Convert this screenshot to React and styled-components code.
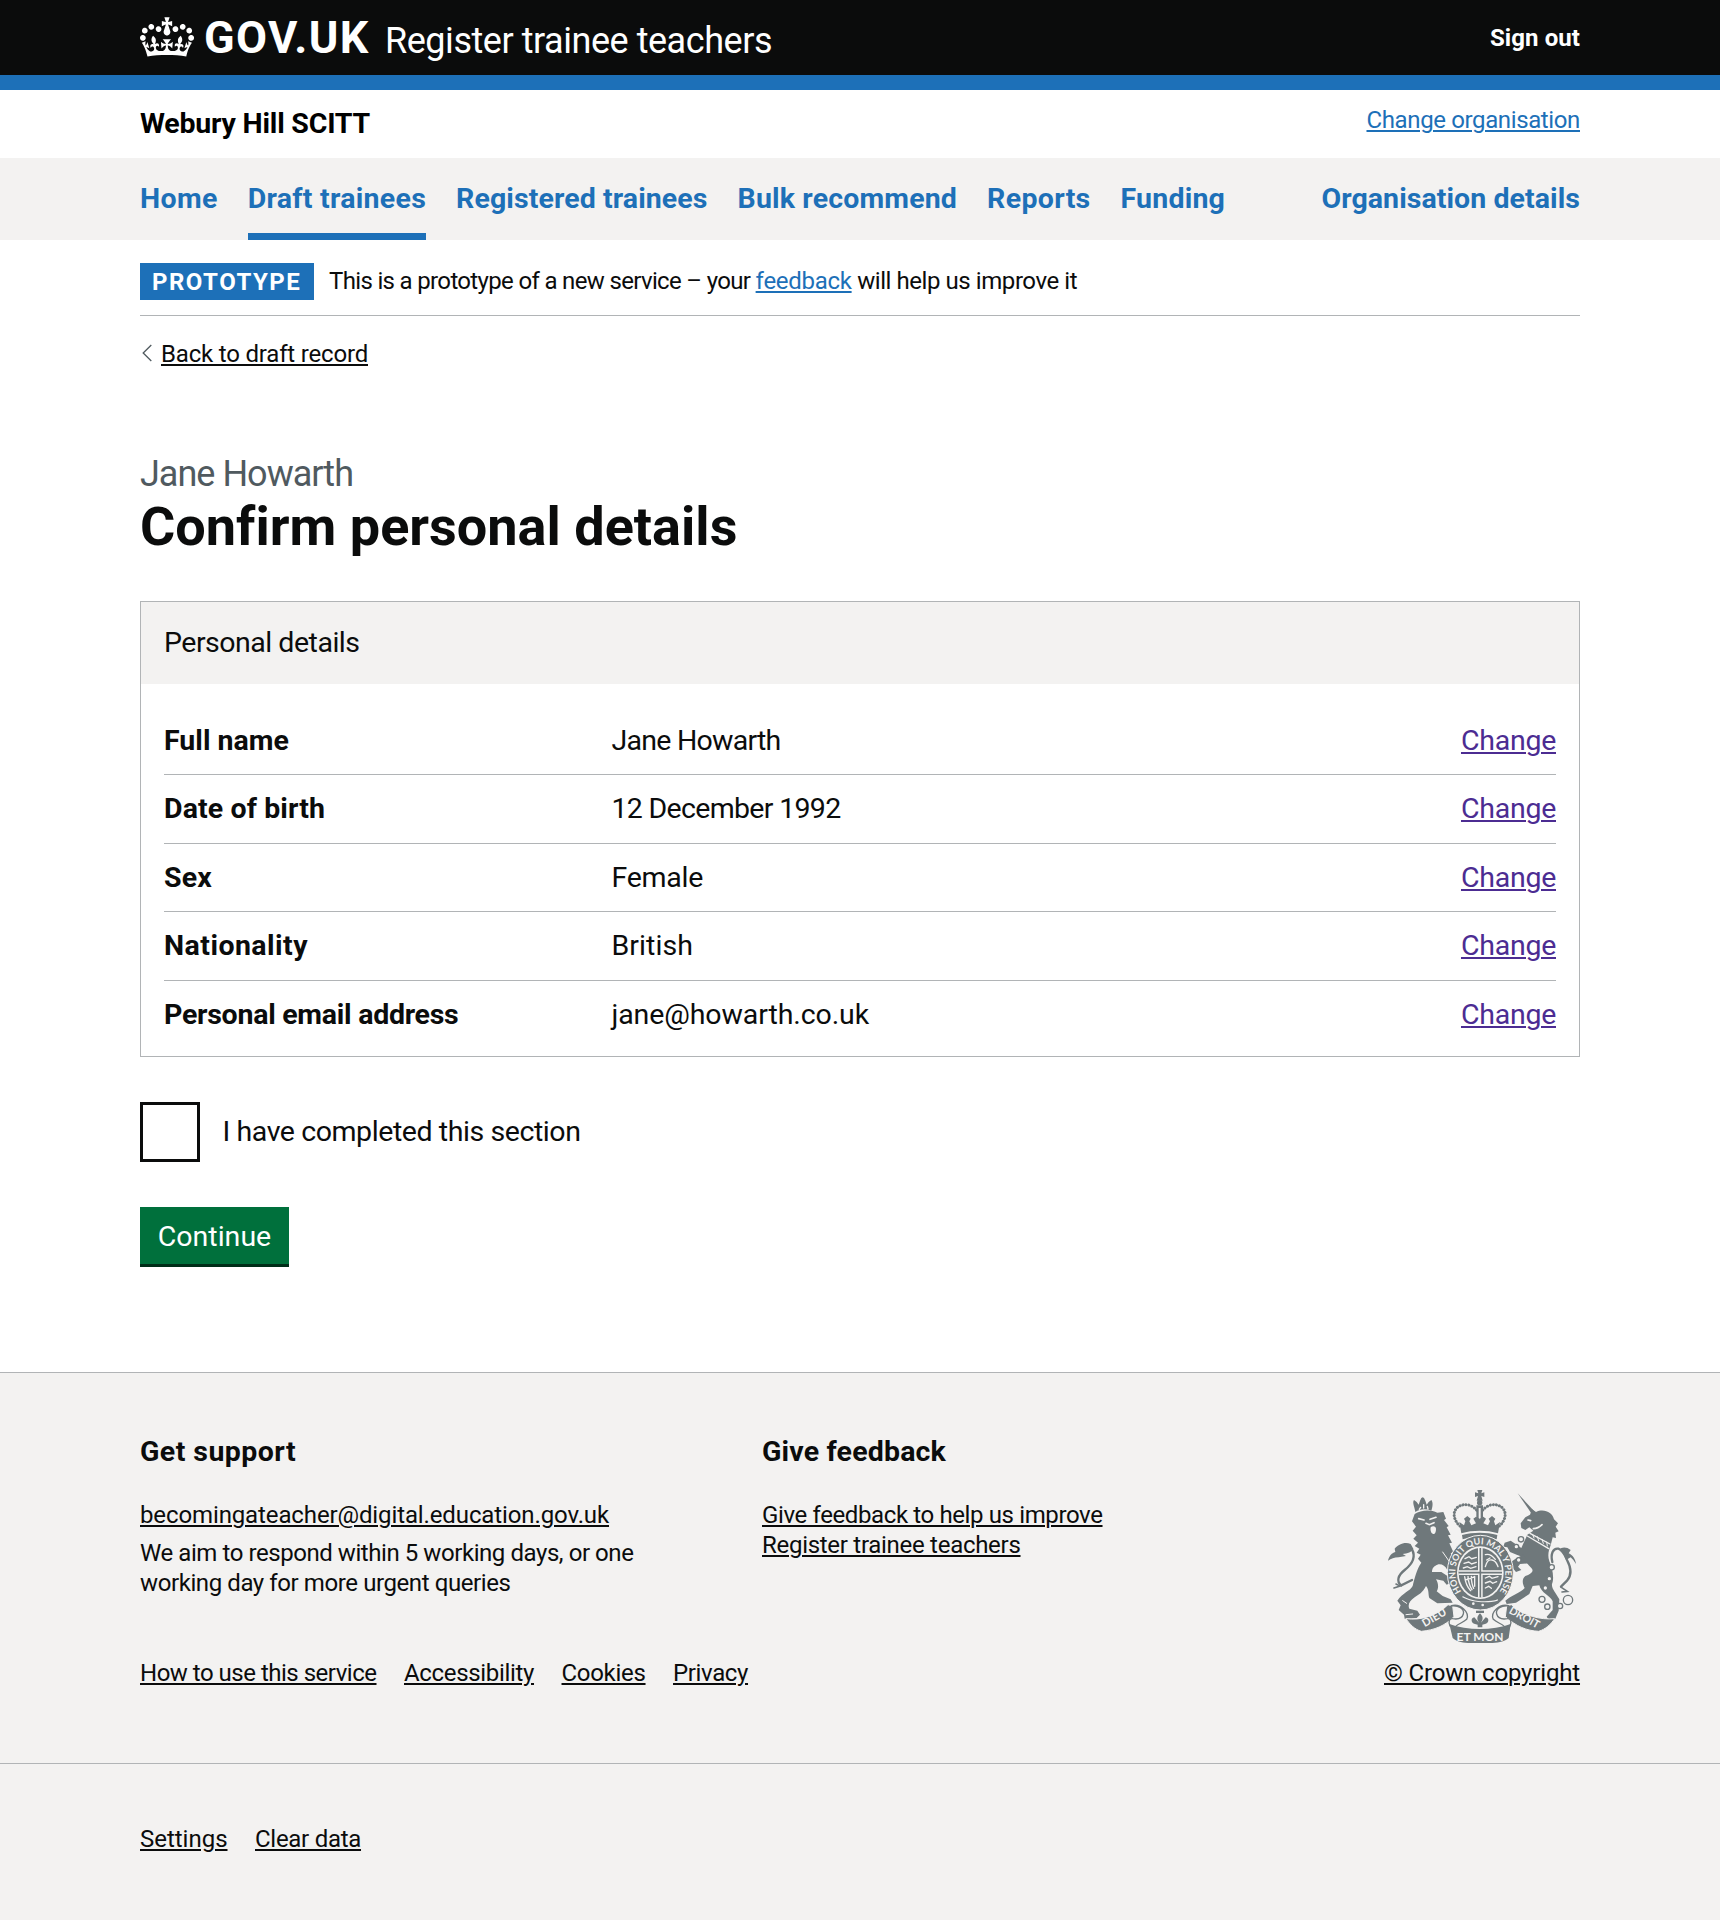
import React from "react";
import styled, { createGlobalStyle, css } from "styled-components";

const c = {
  ink: "#0b0c0c",
  blue: "#1d70b8",
  visited: "#4c2c92",
  grey: "#f3f2f1",
  line: "#b1b4b6",
  secondary: "#505a5f",
  green: "#00703c",
  crest: "#6f787b",
};

const GlobalStyle = createGlobalStyle`
  *, *::before, *::after { box-sizing: border-box; }
  body {
    margin: 0;
    background: #fff;
    color: ${c.ink};
    font-family: Roboto, "Liberation Sans", sans-serif;
    font-size: 28.5px;
    line-height: 37.5px;
  }
  h1, h2, p, ul, dl, dd, dt { margin: 0; padding: 0; font: inherit; }
  ul { list-style: none; }
`;

const tracking = css`
  letter-spacing: ${(p) => p.$ls || 0}px;
`;

const Page = styled.div`
  display: flex;
  flex-direction: column;
  min-height: 1920px;
`;

const Container = styled.div`
  width: 1440px;
  margin: 0 auto;
`;

const T = styled.span`
  ${tracking}
`;

const Link = styled.a`
  ${tracking}
  color: ${(p) => p.$color || c.ink};
  text-decoration: underline;
  text-decoration-thickness: 2px;
  text-underline-offset: 2px;
  white-space: nowrap;
`;

/* Header */
const Header = styled.header`
  height: 90px;
  background: ${c.ink};
  border-bottom: 15px solid ${c.blue};
  color: #fff;
`;
const HeaderRow = styled(Container)`
  display: flex;
  align-items: flex-start;
  height: 75px;
`;
const Crown = styled.svg`
  display: block;
  width: 54px;
  height: 40px;
  margin: 16.5px 10px 0 0;
  fill: #fff;
`;
const Logotype = styled.span`
  ${tracking}
  width: 181px;
  padding-top: 15px;
  font-size: 45px;
  font-weight: 700;
  line-height: 45px;
  white-space: nowrap;
`;
const ServiceName = styled.span`
  ${tracking}
  flex: 1;
  padding-top: 23px;
  font-size: 36px;
  line-height: 37.5px;
`;
const SignOut = styled.span`
  ${tracking}
  padding-top: 23px;
  font-size: 24px;
  font-weight: 700;
  line-height: 30px;
`;

/* Organisation bar */
const OrgBar = styled(Container)`
  display: flex;
  justify-content: space-between;
  align-items: flex-start;
  height: 68px;
  padding-top: 15px;
  color: #000;
`;
const OrgName = styled.span`
  ${tracking}
  font-weight: 700;
`;
const OrgChange = styled.span`
  font-size: 24px;
  line-height: 30px;
`;

/* Primary navigation */
const Nav = styled.nav`
  height: 82px;
  background: ${c.grey};
`;
const NavList = styled.ul`
  display: flex;
  gap: 30px;
  width: 1440px;
  height: 82px;
  margin: 0 auto;
`;
const NavItem = styled.li`
  ${tracking}
  width: ${(p) => p.$w}px;
  margin-left: ${(p) => (p.$last ? "auto" : 0)};
  padding-top: 22px;
  border-bottom: ${(p) => (p.$current ? `7px solid ${c.blue}` : "0")};
  color: ${c.blue};
  font-weight: 700;
  white-space: nowrap;
`;

/* Phase banner */
const Phase = styled(Container)`
  display: flex;
  height: 76px;
  padding-top: 23px;
  border-bottom: 1px solid ${c.line};
  font-size: 24px;
  line-height: 30px;
`;
const Tag = styled.strong`
  ${tracking}
  width: 174px;
  height: 37px;
  margin-right: 15px;
  padding: 4px 0 0 12px;
  background: ${c.blue};
  color: #fff;
  font-weight: 700;
`;
const PhaseText = styled.span`
  padding-top: 3px;
  white-space: pre;
`;

const BackLink = styled(Container)`
  display: flex;
  align-items: flex-start;
  gap: 9.5px;
  padding-top: 23px;
  font-size: 24px;
  line-height: 30px;
`;
const Chevron = styled.svg`
  display: block;
  width: 10px;
  height: 18px;
  margin: 5px 0 0 1.5px;
  fill: none;
  stroke: ${c.secondary};
  stroke-width: 1.3;
`;

/* Main */
const Main = styled(Container)`
  padding-top: 87px;
`;
const Caption = styled.span`
  ${tracking}
  display: block;
  color: ${c.secondary};
  font-size: 36px;
  line-height: 37.5px;
`;
const Title = styled.h1`
  ${tracking}
  padding-top: 4.5px;
  margin-bottom: 46px;
  font-size: 54px;
  font-weight: 700;
  line-height: 57px;
`;
const Card = styled.section`
  border: 1px solid ${c.line};
  height: 456px;
`;
const CardHeader = styled.div`
  ${tracking}
  height: 82px;
  padding: 22px 23px 0;
  background: ${c.grey};
`;
const Rows = styled.dl`
  padding: 22.5px 23px 0;
`;
const Row = styled.div`
  display: flex;
  padding: 15px 0;
  height: ${(p) => (p.$last ? 67.5 : 68.5)}px;
  border-bottom: ${(p) => (p.$last ? "0" : `1px solid ${c.line}`)};
`;
const Key = styled.dt`
  ${tracking}
  width: 447.5px;
  font-weight: 700;
`;
const Value = styled.dd`
  ${tracking}
  flex: 1;
`;

const Check = styled.label`
  display: flex;
  align-items: center;
  gap: 22.5px;
  height: 60px;
  margin: 45px 0;
`;
const Box = styled.span`
  width: 60px;
  height: 60px;
  border: 3px solid ${c.ink};
`;
const Button = styled.button`
  ${tracking}
  display: block;
  width: 149px;
  height: 57px;
  padding: 2px 0 0;
  border: 0;
  background: ${c.green};
  box-shadow: 0 3px 0 #002d18;
  color: #fff;
  font: inherit;
`;

/* Footer */
const Footer = styled.footer`
  flex: 1;
  margin-top: 108px;
  border-top: 1px solid ${c.line};
  background: ${c.grey};
  font-size: 24px;
  line-height: 30px;
`;
const Columns = styled(Container)`
  display: grid;
  grid-template-columns: 622px 500px 1fr;
  height: 390px;
  padding-top: 60px;
`;
const FooterHeading = styled.h2`
  ${tracking}
  margin-bottom: 29.5px;
  font-size: 28.5px;
  font-weight: 700;
  line-height: 37.5px;
`;
const FooterLine = styled.p`
  margin-top: ${(p) => p.$gap || 0}px;
  white-space: nowrap;
`;
const LinkRow = styled.ul`
  display: flex;
  gap: 27.5px;
  margin-top: ${(p) => p.$top || 0}px;
`;
const CrestColumn = styled.div`
  display: flex;
  flex-direction: column;
  align-items: center;
  justify-self: end;
  width: 196px;
  padding-top: 57px;
`;
const Crest = styled.svg`
  display: block;
  width: 188px;
  height: 153px;
  margin-bottom: 15px;
`;
const CrestText = styled.text`
  font-family: Lato, sans-serif;
  font-weight: 700;
  font-size: ${(p) => p.$size}px;
  fill: ${c.grey};
  text-anchor: middle;
`;
const PrototypeLinks = styled.div`
  border-top: 1px solid ${c.line};
  padding-top: 59.5px;
`;

const nav = [
  ["Home", 77.7, 0.353],
  ["Draft trainees", 178.4, 0.28],
  ["Registered trainees", 251.5, 0.097],
  ["Bulk recommend", 219.5, 0.158],
  ["Reports", 103.5, 0.331],
  ["Funding", 104.5, 0.197],
  ["Organisation details", 258.5, 0.067],
];

const details = [
  ["Full name", 0.025, "Jane Howarth", -0.752],
  ["Date of birth", 0.11, "12 December 1992", -0.679],
  ["Sex", 0.187, "Female", -0.269],
  ["Nationality", 0.46, "British", 0.071],
  ["Personal email address", -0.263, "jane@howarth.co.uk", -0.104],
];

const CrownLogo = () => (
  <Crown viewBox="0 0 132 97" aria-hidden="true">
    <path d="M25 30.2c3.5 1.5 7.7-.2 9.1-3.7 1.5-3.6-.2-7.8-3.9-9.2-3.6-1.4-7.6.3-9.1 3.9-1.4 3.5.3 7.5 3.9 9zM9 39.5c3.6 1.5 7.8-.2 9.2-3.7 1.5-3.6-.2-7.8-3.9-9.1-3.6-1.5-7.6.2-9.1 3.8-1.4 3.5.3 7.5 3.8 9zM4.4 57.2c3.5 1.5 7.7-.2 9.1-3.8 1.5-3.6-.2-7.7-3.9-9.1-3.5-1.5-7.6.3-9.1 3.8-1.4 3.5.3 7.6 3.9 9.1zm38.3-21.4c3.5 1.5 7.7-.2 9.1-3.8 1.5-3.6-.2-7.7-3.9-9.1-3.6-1.5-7.6.3-9.1 3.8-1.3 3.6.4 7.7 3.9 9.1zm64.4-5.6c-3.6 1.5-7.8-.2-9.1-3.7-1.5-3.6.2-7.8 3.8-9.2 3.6-1.4 7.7.3 9.2 3.9 1.3 3.5-.4 7.5-3.9 9zm15.9 9.3c-3.6 1.5-7.7-.2-9.1-3.7-1.5-3.6.2-7.8 3.7-9.1 3.6-1.5 7.7.2 9.2 3.8 1.5 3.5-.3 7.5-3.8 9zm4.7 17.7c-3.6 1.5-7.8-.2-9.2-3.8-1.5-3.6.2-7.7 3.9-9.1 3.6-1.5 7.7.3 9.2 3.8 1.3 3.5-.4 7.6-3.9 9.1zM89.3 35.8c-3.6 1.5-7.8-.2-9.2-3.8-1.4-3.6.2-7.7 3.9-9.1 3.6-1.5 7.7.3 9.2 3.8 1.4 3.6-.3 7.7-3.9 9.1zM69.7 17.7l8.9 4.7V9.3l-8.9 2.8c-.2-.3-.5-.6-.9-.9L72.4 0H59.6l3.5 11.2c-.3.3-.6.5-.9.9l-8.8-2.8v13.1l8.8-4.7c.3.3.6.7.9.9l-5 15.4v.1c-.2.8-.4 1.6-.4 2.4 0 4.1 3.1 7.5 7 8.1h.2c.3 0 .7.1 1 .1.4 0 .7 0 1-.1h.2c4-.6 7.1-4.1 7.1-8.1 0-.8-.1-1.7-.4-2.4V34l-5.1-15.4c.4-.2.7-.6 1-.9zM66 92.8c16.9 0 32.8 1.1 47.1 3.2 4-16.9 8.9-26.7 14-33.5l-9.6-3.4c1 4.9 1.1 7.2 0 10.2-1.5-1.4-3-4.3-4.2-8.7L108.6 76c2.8-2 5-3.2 7.5-3.3-4.4 9.4-10 11.9-13.6 11.2-4.3-.8-6.3-4.6-5.6-7.9 1-4.7 5.7-5.9 8-.5 4.3-8.7-3-11.4-7.6-8.8 7.1-7.2 7.9-13.5 2.1-21.1-8 6.1-8.1 12.3-4.5 20.8-4.7-5.4-12.1-2.5-9.5 6.2 3.4-5.2 7.9-2 7.2 3.1-.6 4.3-6.4 7.8-13.5 7.2-10.3-.9-10.9-8-11.2-13.8 2.5-.5 7.1 1.8 11 7.3L80.2 60c-4.1 4.4-8 5.3-12.3 5.4 1.4-4.4 8-11.6 8-11.6H55.5s6.4 7.2 7.9 11.6c-4.2-.1-8-1-12.3-5.4l1.4 16.4c3.9-5.5 8.5-7.7 10.9-7.3-.3 5.8-.9 12.8-11.1 13.8-7.2.6-12.9-2.9-13.5-7.2-.7-5 3.8-8.3 7.1-3.1 2.7-8.7-4.6-11.6-9.4-6.2 3.7-8.5 3.6-14.7-4.6-20.8-5.8 7.6-5 13.9 2.2 21.1-4.7-2.6-11.9.1-7.7 8.8 2.3-5.5 7.1-4.2 8.1.5.7 3.3-1.3 7.1-5.7 7.9-3.5.7-9-1.8-13.5-11.2 2.5.1 4.7 1.3 7.5 3.3l-4.7-15.4c-1.2 4.4-2.7 7.2-4.3 8.7-1.1-3-.9-5.3 0-10.2l-9.5 3.4c5 6.9 9.9 16.7 14 33.5 14.8-2.1 30.8-3.2 47.7-3.2z" />
  </Crown>
);

const RoyalArms = () => (
  <Crest viewBox="12 18 564 459" role="img" aria-label="Royal coat of arms">
    <g fill={c.crest}>
      {/* crown */}
      <path d="M280 18h15l-3 10 9-3v14l-9-3 4 14h-18l4-14-9 3V25l10 3z" />
      <circle cx="287" cy="56" r="8" />
      <path fillRule="evenodd" d="M277 64h20v50h-20zM284 72v34h6V72z" />
      <g fill="none" stroke={c.crest} strokeWidth="9" strokeLinecap="round" strokeDasharray="0.1 9">
        <path d="M228 126c-16-14-22-34-14-48 8-16 32-20 48-12 10 5 16 12 20 18" />
        <path d="M346 126c16-14 22-34 14-48-8-16-32-20-48-12-10 5-16 12-20 18" />
      </g>
      <path d="M232 148l-6-34 14 10 4-12-4-8 10-8 10 8-4 8 6 12 14-6-8-14 8-6 11 6 11-6 8 6-8 14 14 6 6-12-4-8 10-8 10 8-4 8 4 12 14-10-6 34c-34-10-76-10-110 0z" />
      <path d="M234 153c34-9 72-9 106 0l-2 13c-32-9-70-9-102 0z" />

      {/* lion */}
      <path d="M94 84c-2-14-10-28-4-36l8 6 6 8 4-12 4-8 4-2 4 2 4 8 4 12 6-8 8-6c6 8 4 20 0 32-16-6-34-6-48 4z" />
      <path d="M92 90C110 78 140 76 160 86L178 84 186 104 180 108 194 126 188 130 200 152 192 154 204 176 196 178 208 204 200 208 212 226 204 236 214 250 204 262 190 258C184 244 170 238 160 242C150 246 144 252 144 264L172 264 196 280 200 296 188 302 178 290 156 286C164 300 164 312 158 322L176 336 200 346 206 356 160 358 136 342C132 330 136 318 126 306C116 326 104 332 92 340C78 350 70 362 76 374L100 380 108 392 98 402 62 404 60 392 44 378 50 364 40 350C56 326 78 322 86 306C92 282 98 256 112 236L102 224 110 212 98 206 106 194 92 186 102 176 88 164 98 154 86 140 96 128 84 112Z" />
      <path d="M12 230c4-14 10-22 22-26l-2-10c10-12 30-22 48-14l8 14c-4 10-18 14-32 16l10 6-22 4c-14 0-22 4-32 10z" />

      {/* unicorn */}
      <path d="M401 28l54 58-9 8z" />
      <path d="M410 118L424 100 438 92 444 76 456 84C480 72 506 86 510 106L522 118 515 128 524 142 514 146 516 162 506 160 500 184C494 200 490 214 496 232C504 250 512 280 504 300C502 314 516 326 526 346L524 380 514 404 494 408 488 398 506 378 506 352C500 336 470 326 466 304L446 306 436 330 396 356 368 360 364 350C380 336 410 326 422 312C416 300 412 286 424 276C440 270 452 262 442 252C432 242 424 232 418 220L398 212 378 204 370 190 358 188 362 176 380 170 398 182 412 192C418 178 424 166 430 152L448 140 436 130 424 138 412 132Z" />
      <path d="M418 212L398 222 384 232 384 250 396 264 412 258 402 248 408 240 436 238z" />
      <path d="M576 240c-2-16-10-26-22-32l6-10c-12-10-28-10-34 0l12 12 8 18 14-8 8 8z" />
    </g>
    <g fill="none" stroke={c.crest} strokeLinecap="round" strokeWidth="7">
      <path d="M84 196c14 26-2 46-22 62-20 16-26 34-10 46l32-16" />
      <path d="M505 234c-6-24 2-42 18-40 14 4 20 20 26 34 12 22 14 46 0 62l-18 18" />
      <path d="M532 310l18 12-16 2M36 300l12 6-18 6" strokeWidth="5" />
    </g>

    {/* faces, coronet collar and musculature */}
    <g fill="none" stroke={c.grey} strokeWidth="5" strokeLinecap="round">
      <path d="M104 104l16 4M138 106l18-6M126 118l10 4 14-6" />
      <path d="M448 134c10 0 18-4 26-12M432 108l8 2" />
      <path d="M106 76l4-6M119 72v-10M132 75l-2-8" strokeWidth="4" />
      <path d="M430 156l64 38M438 148l60 32" strokeWidth="4" />
      <path d="M446 152l4 10M460 158l4 12M474 166l4 12M488 174l2 12" strokeWidth="3" />
      <path d="M176 204l28 40M56 350l12 8M66 392l20-2" strokeWidth="3" />
    </g>
    <path d="M140 130c6-6 16-4 16 4s-2 16-8 16-10-10-8-20z" fill={c.grey} />
    <g fill={c.grey} stroke={c.crest} strokeWidth="4">
      <circle cx="411" cy="166" r="8" />
      <circle cx="397" cy="188" r="7" />
      <circle cx="404" cy="228" r="7" />
      <circle cx="503" cy="250" r="8" />
      <circle cx="496" cy="284" r="7" />
      <circle cx="484" cy="312" r="7" />
      <circle cx="474" cy="346" r="9" />
      <circle cx="490" cy="368" r="8" />
      <circle cx="528" cy="366" r="8" />
      <circle cx="552" cy="348" r="14" />
    </g>

    {/* garter */}
    <ellipse cx="289" cy="266" rx="99" ry="112" fill={c.crest} stroke={c.grey} strokeWidth="3" />
    <ellipse cx="289" cy="266" rx="70" ry="79" fill={c.grey} />
    <ellipse cx="289" cy="266" rx="65" ry="74" fill={c.crest} />
    {/* quartered shield */}
    <g stroke={c.grey} fill="none">
      <path d="M289 192v148M224 266h130" strokeWidth="14" />
      <g strokeWidth="4" strokeLinecap="round">
        <path d="M243 224l12-6 8 6 14-4M240 238l14-4 9 6 14-5M238 252l12-4 10 5 16-5" />
        <path d="M304 212c14-4 22 4 30 14M304 248c4-14 8-22 20-20s14 10 18 20M308 228l10-6" />
        <path d="M304 282l12-5 8 6 18-5M304 297l14-5 8 6 12-5M304 312l10-5 8 6" />
        <path d="M242 278c2 16 6 30 18 42M252 277c1 14 4 28 12 40M262 277c0 14 2 26 7 36M272 277v30M244 288c10-2 20-6 28-10" />
      </g>
    </g>
    <path d="M289 192v148M224 266h130" stroke={c.crest} strokeWidth="5" fill="none" />

    <path id="garter" d="M236 328A75 86 0 1 1 342 328" fill="none" />
    <CrestText $size="27">
      <textPath href="#garter" startOffset="50%" textLength="372">HONI SOIT QUI MAL Y PENSE</textPath>
    </CrestText>
    <g fill={c.grey}>
      <circle cx="268" cy="359" r="4" />
      <circle cx="296" cy="363" r="4" />
      <path d="M236 336c20 14 70 22 106 10l-1 4c-34 10-82 4-106-10z" />
    </g>

    {/* motto ribbon */}
    <g fill={c.crest} stroke={c.grey} strokeWidth="3">
      <path d="M66 404c44 6 92-8 126-42l14 4 4 32c-28 28-58 40-98 44-20-6-34-20-46-38z" />
      <path d="M512 404c-42 4-94-8-130-42l-14 4-4 32c34 30 64 42 100 44 20-6 36-20 48-38z" />
    </g>
    <g fill={c.grey} stroke={c.crest} strokeWidth="4">
      <path d="M200 366c24-4 42 10 38 24s-20 16-32 14c-10-2-14 10-8 22l14 8c0-12 24-16 36-28 10-20-18-50-48-40z" />
      <path d="M376 366c-24-4-42 10-38 24s20 16 32 14c10-2 14 10 8 22l-14 8c0-12-24-16-36-28-10-20 18-50 48-40z" />
    </g>
    <path d="M196 420c54 20 130 20 184 0l-6 42c-14 14-44 16-86 16s-68-2-82-16z" fill={c.crest} />
    <g fill={c.crest}>
      <path d="M276 380h24v7h-24z" />
      <path d="M288 388c10 10 10 18 3 28l14-16c12 2 10 18-2 20l-8 2v8h-14v-8l-8-2c-12-2-14-18-2-20l14 16c-7-10-7-18 3-28z" />
    </g>
    <CrestText $size="33" transform="translate(156 410) rotate(-30)">DIEU</CrestText>
    <CrestText $size="32" transform="translate(416 410) rotate(29)">DROIT</CrestText>
    <CrestText $size="36" x="288" y="470">ET MON</CrestText>
  </Crest>
);

export default function App() {
  return (
    <Page>
      <GlobalStyle />
      <Header>
        <HeaderRow>
          <CrownLogo />
          <Logotype $ls={1.45}>GOV.UK</Logotype>
          <ServiceName $ls={-0.456}>Register trainee teachers</ServiceName>
          <SignOut $ls={0.079}>Sign out</SignOut>
        </HeaderRow>
      </Header>
      <OrgBar>
        <OrgName $ls={-0.207}>Webury Hill SCITT</OrgName>
        <OrgChange>
          <Link $color={c.blue} $ls={-0.373}>Change organisation</Link>
        </OrgChange>
      </OrgBar>
      <Nav>
        <NavList>
          {nav.map(([label, w, ls], i) => (
            <NavItem key={label} $w={w} $ls={ls} $current={i === 1} $last={i === nav.length - 1}>
              {label}
            </NavItem>
          ))}
        </NavList>
      </Nav>
      <Phase>
        <Tag $ls={1.5}>PROTOTYPE</Tag>
        <PhaseText>
          <T $ls={-0.66}>This is a prototype of a new service – your </T>
          <Link $color={c.blue} $ls={-0.289}>feedback</Link>
          <T $ls={-0.43}> will help us improve it</T>
        </PhaseText>
      </Phase>
      <BackLink>
        <Chevron viewBox="0 0 10 18" aria-hidden="true">
          <path d="M9.3 1 1.2 9l8.1 8" />
        </Chevron>
        <Link $ls={-0.184}>Back to draft record</Link>
      </BackLink>
      <Main as="main">
        <Caption $ls={-0.99}>Jane Howarth</Caption>
        <Title $ls={0.01}>Confirm personal details</Title>
        <Card>
          <CardHeader $ls={-0.491}>Personal details</CardHeader>
          <Rows>
            {details.map(([key, kls, value, vls], i) => (
              <Row key={key} $last={i === details.length - 1}>
                <Key $ls={kls}>{key}</Key>
                <Value $ls={vls}>{value}</Value>
                <Link $color={c.visited} $ls={-0.267}>Change</Link>
              </Row>
            ))}
          </Rows>
        </Card>
        <Check>
          <Box />
          <T $ls={-0.418}>I have completed this section</T>
        </Check>
        <Button $ls={0.018}>Continue</Button>
      </Main>
      <Footer>
        <Columns>
          <div>
            <FooterHeading $ls={0.448}>Get support</FooterHeading>
            <FooterLine>
              <Link $ls={-0.118}>becomingateacher@digital.education.gov.uk</Link>
            </FooterLine>
            <FooterLine $gap={8}>
              <T $ls={-0.435}>We aim to respond within 5 working days, or one</T>
              <br />
              <T $ls={-0.408}>working day for more urgent queries</T>
            </FooterLine>
            <LinkRow $top={60}>
              <li><Link $ls={-0.492}>How to use this service</Link></li>
              <li><Link $ls={-0.331}>Accessibility</Link></li>
              <li><Link $ls={-0.301}>Cookies</Link></li>
              <li><Link $ls={-0.362}>Privacy</Link></li>
            </LinkRow>
          </div>
          <div>
            <FooterHeading $ls={0.174}>Give feedback</FooterHeading>
            <FooterLine>
              <Link $ls={-0.378}>Give feedback to help us improve</Link>
              <br />
              <Link $ls={-0.284}>Register trainee teachers</Link>
            </FooterLine>
          </div>
          <CrestColumn>
            <RoyalArms />
            <Link $ls={-0.16}>© Crown copyright</Link>
          </CrestColumn>
        </Columns>
        <PrototypeLinks>
          <Container>
            <LinkRow>
              <li><Link $ls={-0.017}>Settings</Link></li>
              <li><Link $ls={-0.282}>Clear data</Link></li>
            </LinkRow>
          </Container>
        </PrototypeLinks>
      </Footer>
    </Page>
  );
}
